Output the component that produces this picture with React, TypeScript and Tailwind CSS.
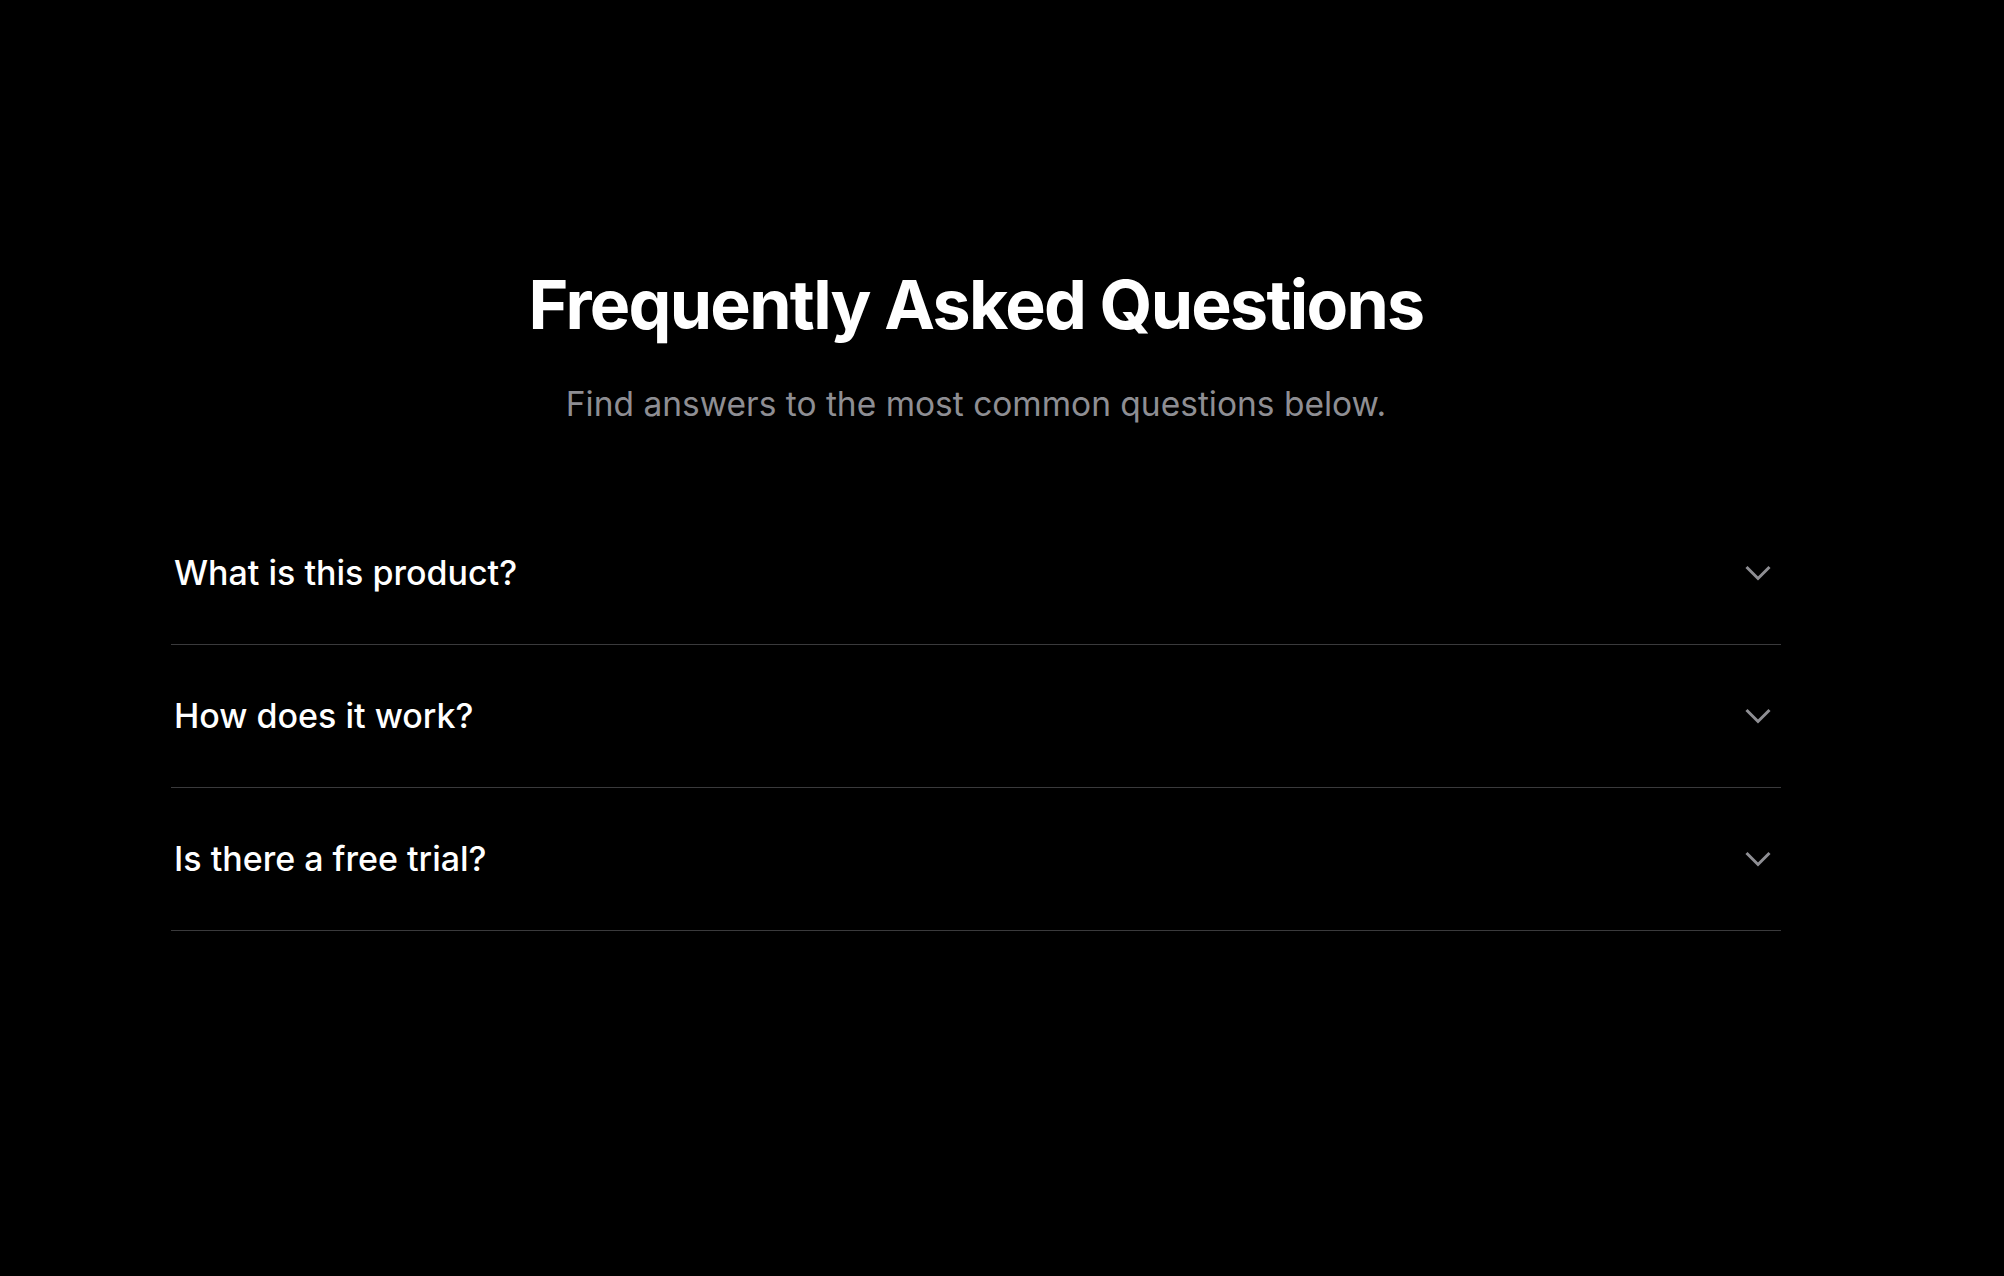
const faqs = [
  { id: 1, question: 'What is this product?' },
  { id: 2, question: 'How does it work?' },
  { id: 3, question: 'Is there a free trial?' },
]

const Chevron = () => (
  <svg width="26" height="16" viewBox="0 0 26 16" fill="none" className="text-[#8e8e93]">
    <polyline points="1.5,2 13,13.5 24.5,2" stroke="currentColor" strokeWidth="3" strokeLinecap="butt" strokeLinejoin="miter" />
  </svg>
)

const App = () => {
  return (
    <div className="min-h-screen bg-black pr-[52px] font-['Inter',sans-serif]">
      <div className="mx-auto w-[1610px] pt-[270px]">
        <h1 className="text-center text-[68px] font-bold leading-none tracking-tight text-white">
          Frequently Asked Questions
        </h1>
        <p className="mt-[50px] text-center text-[33.5px] leading-none text-[#8e8e93]">
          Find answers to the most common questions below.
        </p>

        <div className="mt-[80px]">
          {faqs.map((faq) => (
            <div key={faq.id} className="flex h-[143px] items-center justify-between border-b border-[#3a3a3c] pl-[3px] pr-[10px]">
              <span className="text-[34px] font-medium text-white">{faq.question}</span>
              <Chevron />
            </div>
          ))}
        </div>
      </div>
    </div>
  )
}

export default App
